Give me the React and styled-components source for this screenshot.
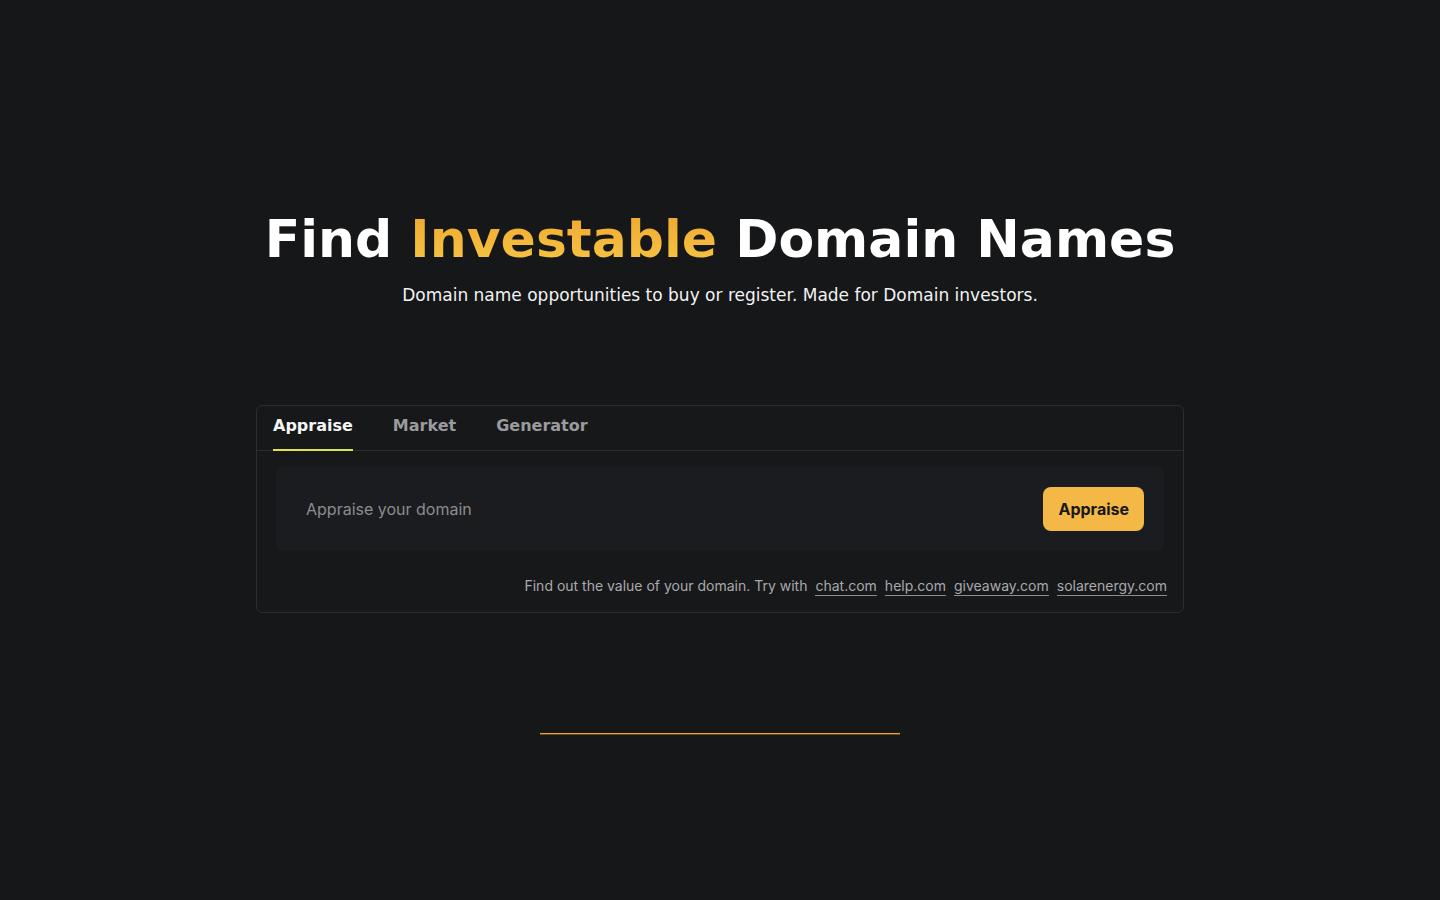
import React, { useState } from 'react';
import styled, { createGlobalStyle } from 'styled-components';

const GlobalStyle = createGlobalStyle`
  html, body {
    margin: 0;
    padding: 0;
    background: #161719;
    color: #f5f5f5;
    font-family: 'DejaVu Sans', sans-serif;
  }
  * { box-sizing: border-box; }
`;

const Page = styled.main`
  min-height: 900px;
  display: flex;
  flex-direction: column;
  align-items: center;
  padding-top: 206px;
`;

const Title = styled.h1`
  margin: 0;
  font-family: 'DejaVu Sans', sans-serif;
  font-weight: 700;
  font-size: 52px;
  line-height: 66px;
  letter-spacing: 0;
  color: #ffffff;
  text-align: center;
`;

const Accent = styled.span`
  background: linear-gradient(180deg, #f0a52e 0%, #f6c846 100%);
  -webkit-background-clip: text;
  background-clip: text;
  color: transparent;
`;

const Subtitle = styled.p`
  margin: 11px 0 0;
  font-family: 'DejaVu Sans', sans-serif;
  font-size: 17px;
  line-height: 24px;
  color: #f2f2f2;
`;

const Card = styled.section`
  margin-top: 98px;
  width: 928px;
  border: 1px solid #2b2d30;
  border-radius: 6px;
  background: #17181a;
`;

const TabList = styled.div`
  display: flex;
  gap: 40px;
  padding: 0 16px;
  border-bottom: 1px solid #2b2d30;
`;

const Tab = styled.button`
  position: relative;
  background: none;
  border: none;
  padding: 9px 0 14px;
  font-family: 'DejaVu Sans', sans-serif;
  font-weight: 700;
  font-size: 16px;
  line-height: 21px;
  color: ${p => (p.$active ? '#f5f5f5' : '#9a9b9d')};
  cursor: pointer;

  &::after {
    content: '';
    position: absolute;
    left: 0;
    right: 0;
    bottom: -1px;
    height: 2px;
    background: ${p => (p.$active ? 'linear-gradient(90deg, #e8e04a, #cfe85a)' : 'transparent')};
  }
`;

const Body = styled.div`
  padding: 16px 19px 16px 19px;
`;

const SearchBox = styled.form`
  display: flex;
  align-items: center;
  height: 84px;
  padding: 0 20px 0 30px;
  background: #1b1c1f;
  border-radius: 6px;
`;

const Input = styled.input`
  flex: 1;
  padding: 0;
  background: transparent;
  border: none;
  outline: none;
  font-family: 'Inter', sans-serif;
  font-size: 16px;
  color: #e5e5e5;

  &::placeholder {
    color: #8b8c8f;
  }
`;

const Button = styled.button`
  height: 44px;
  padding: 0 15px;
  border: none;
  border-radius: 8px;
  background: #f3b845;
  color: #17181a;
  font-family: 'Inter', sans-serif;
  font-weight: 700;
  font-size: 16px;
  cursor: pointer;
`;

const Hint = styled.p`
  margin: 25px -3px 0 0;
  display: flex;
  justify-content: flex-end;
  align-items: baseline;
  gap: 8px;
  font-family: 'Inter', sans-serif;
  font-size: 14px;
  line-height: 20px;
  color: #a9aaac;
`;

const Example = styled.a`
  color: #a9aaac;
  text-decoration: none;
  border-bottom: 1px solid #8d8e91;
  line-height: 18px;
  cursor: pointer;
`;

const Divider = styled.div`
  margin-top: 120px;
  width: 360px;
  height: 2px;
  background: linear-gradient(180deg, #f3a12a 50%, rgba(217, 130, 30, 0.45) 50%);
`;

const tabs = ['Appraise', 'Market', 'Generator'];
const examples = ['chat.com', 'help.com', 'giveaway.com', 'solarenergy.com'];

export default function App() {
  const [active, setActive] = useState('Appraise');
  const [value, setValue] = useState('');

  return (
    <>
      <GlobalStyle />
      <Page>
        <Title>
          Find <Accent>Investable</Accent> Domain Names
        </Title>
        <Subtitle>Domain name opportunities to buy or register. Made for Domain investors.</Subtitle>

        <Card>
          <TabList>
            {tabs.map(t => (
              <Tab key={t} $active={t === active} onClick={() => setActive(t)}>
                {t}
              </Tab>
            ))}
          </TabList>
          <Body>
            <SearchBox onSubmit={e => e.preventDefault()}>
              <Input
                placeholder="Appraise your domain"
                value={value}
                onChange={e => setValue(e.target.value)}
              />
              <Button type="submit">Appraise</Button>
            </SearchBox>
            <Hint>
              <span>Find out the value of your domain. Try with </span>
              {examples.map(d => (
                <Example key={d} onClick={() => setValue(d)}>
                  {d}
                </Example>
              ))}
            </Hint>
          </Body>
        </Card>

        <Divider />
      </Page>
    </>
  );
}
